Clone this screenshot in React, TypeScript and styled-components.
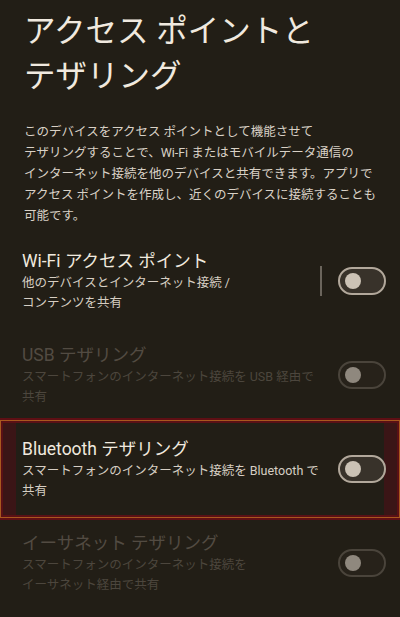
import styled, { createGlobalStyle } from 'styled-components'

const GlobalStyle = createGlobalStyle`
  html, body {
    margin: 0;
    padding: 0;
    background: #221e16;
  }
  body {
    font-family: Roboto, "Noto Sans CJK JP", sans-serif;
    -webkit-font-smoothing: antialiased;
  }
`

const Page = styled.div`
  width: 400px;
  min-height: 617px;
  background: #221e16;
  overflow: hidden;
`

const Header = styled.header`
  padding: 9px 24px 0;
`

const Title = styled.h1`
  margin: 0;
  font-size: 31.5px;
  font-weight: 400;
  line-height: 45px;
  color: #f0e9df;
`

const Description = styled.p`
  margin: 22px 0 8px;
  font-size: 12.5px;
  line-height: 21px;
  color: #d9d1c6;
  & span {
    display: block;
    white-space: nowrap;
  }
`

const Row = styled.div<{ $disabled?: boolean }>`
  display: flex;
  align-items: center;
  padding: 15px 14px 15px 22px;
  .row-text {
    flex: 1;
    min-width: 0;
  }
  .row-title {
    font-size: 17.5px;
    line-height: 24px;
    color: ${p => (p.$disabled ? '#524b42' : '#f0e9df')};
    white-space: nowrap;
  }
  .row-summary {
    font-size: 12.5px;
    line-height: 20px;
    color: ${p => (p.$disabled ? '#4c463d' : '#d6cec3')};
    & span {
      display: block;
      white-space: nowrap;
    }
  }
`

const Highlight = styled.div`
  margin: -4px 0;
  padding: 2px 0;
  border-top: 2px solid #5e0f14;
  border-bottom: 2px solid #5e0f14;
  box-shadow:
    inset 0 0 0 1px #a8581e,
    inset 0 0 0 3px #5a1015,
    inset 16px 0 0 #3b1516,
    inset -16px 0 0 #3b1516;
`

const Divider = styled.div`
  width: 2px;
  height: 30px;
  background: #6b655c;
  margin-right: 16px;
`

const Track = styled.div<{ $disabled?: boolean }>`
  box-sizing: border-box;
  width: 48px;
  height: 28px;
  border-radius: 14px;
  border: 2px solid ${p => (p.$disabled ? '#4a443b' : '#b2a89b')};
  background: ${p => (p.$disabled ? '#27221a' : '#38322a')};
  display: flex;
  align-items: center;
  padding-left: 5px;
  flex-shrink: 0;
`

const Thumb = styled.div<{ $disabled?: boolean }>`
  width: 16px;
  height: 16px;
  border-radius: 50%;
  background: ${p => (p.$disabled ? '#8f887e' : '#cbc2b5')};
`

interface ItemProps {
  title: string;
  summary: string[];
  disabled?: boolean;
  divider?: boolean;
}

const Item = ({ title, summary, disabled, divider }: ItemProps) => (
  <Row $disabled={disabled}>
    <div className="row-text">
      <div className="row-title">{title}</div>
      <div className="row-summary">
        {summary.map(line => (
          <span key={line}>{line}</span>
        ))}
      </div>
    </div>
    {divider && <Divider />}
    <Track $disabled={disabled}>
      <Thumb $disabled={disabled} />
    </Track>
  </Row>
)

const App = () => {
  return (
    <Page>
      <GlobalStyle />
      <Header>
        <Title>
          アクセス ポイントと
          <br />
          テザリング
        </Title>
        <Description>
          <span>このデバイスをアクセス ポイントとして機能させて</span>
          <span>テザリングすることで、Wi-Fi またはモバイルデータ通信の</span>
          <span>インターネット接続を他のデバイスと共有できます。アプリで</span>
          <span>アクセス ポイントを作成し、近くのデバイスに接続することも</span>
          <span>可能です。</span>
        </Description>
      </Header>

      <Item
        title="Wi-Fi アクセス ポイント"
        summary={['他のデバイスとインターネット接続 /', 'コンテンツを共有']}
        divider
      />
      <Item
        title="USB テザリング"
        summary={['スマートフォンのインターネット接続を USB 経由で', '共有']}
        disabled
      />
      <Highlight>
        <Item
          title="Bluetooth テザリング"
          summary={['スマートフォンのインターネット接続を Bluetooth で', '共有']}
        />
      </Highlight>
      <Item
        title="イーサネット テザリング"
        summary={['スマートフォンのインターネット接続を', 'イーサネット経由で共有']}
        disabled
      />
    </Page>
  )
}

export default App
